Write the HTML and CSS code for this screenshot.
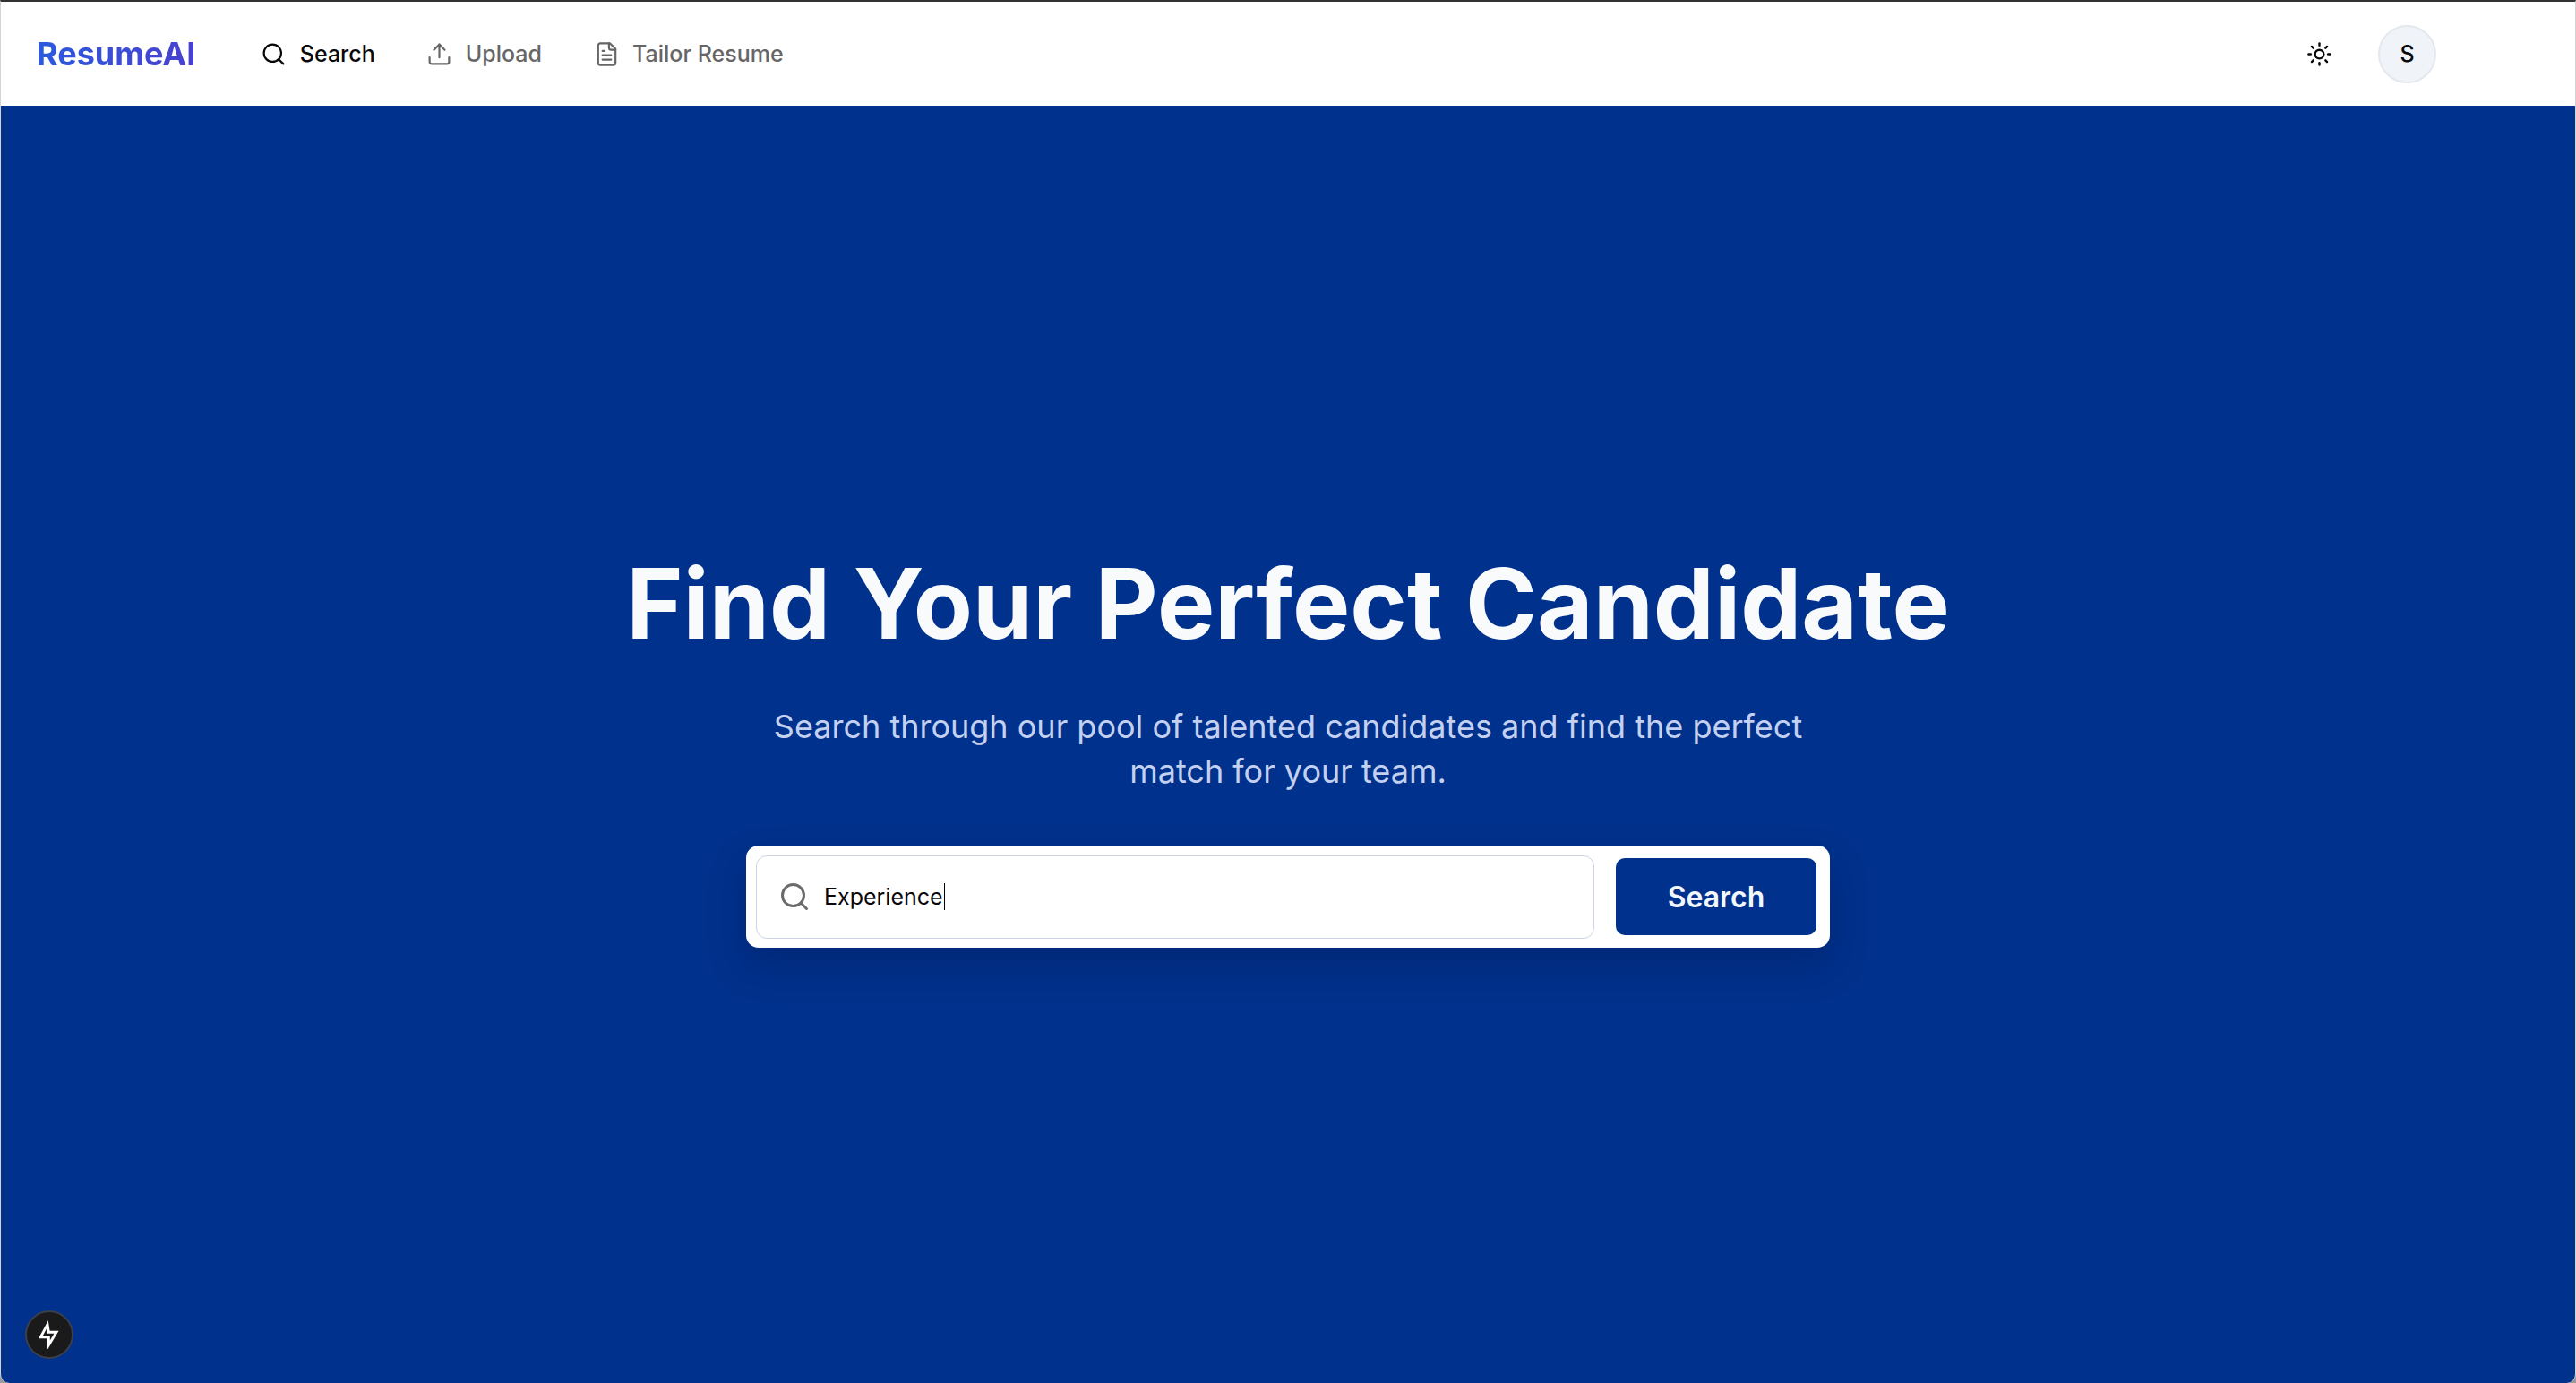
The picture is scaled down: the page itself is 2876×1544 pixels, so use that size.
FILE: index.html
```html
<!DOCTYPE html>
<html>
  <head>
    <meta charset="utf-8" />
    <title>ResumeAI</title>
    <link rel="stylesheet" href="styles.css">
  </head>
  <body>
    <div class="window">
      <nav class="nav">
        <div class="nav-left">
          <a href="#" class="logo">ResumeAI</a>
          <a href="#" class="nav-link active">
            <svg class="icon" viewBox="0 0 24 24"><circle cx="11" cy="11" r="8"/><path d="m21 21-4.3-4.3"/></svg>
            Search
          </a>
          <a href="#" class="nav-link">
            <svg class="icon" viewBox="0 0 24 24"><path d="M21 15v4a2 2 0 0 1-2 2H5a2 2 0 0 1-2-2v-4"/><polyline points="17 8 12 3 7 8"/><line x1="12" y1="3" x2="12" y2="15"/></svg>
            Upload
          </a>
          <a href="#" class="nav-link">
            <svg class="icon" viewBox="0 0 24 24"><path d="M15 2H6a2 2 0 0 0-2 2v16a2 2 0 0 0 2 2h12a2 2 0 0 0 2-2V7Z"/><path d="M14 2v4a2 2 0 0 0 2 2h4"/><path d="M10 9H8"/><path d="M16 13H8"/><path d="M16 17H8"/></svg>
            Tailor Resume
          </a>
        </div>
        <div class="nav-right">
          <svg class="icon sun" viewBox="0 0 24 24"><circle cx="12" cy="12" r="4"/><path d="M12 2v2"/><path d="M12 20v2"/><path d="m4.93 4.93 1.41 1.41"/><path d="m17.66 17.66 1.41 1.41"/><path d="M2 12h2"/><path d="M20 12h2"/><path d="m6.34 17.66-1.41 1.41"/><path d="m19.07 4.93-1.41 1.41"/></svg>
          <div class="avatar">S</div>
        </div>
      </nav>

      <main class="hero">
        <h1>Find Your Perfect Candidate</h1>
        <p class="sub">Search through our pool of talented candidates and find the perfect match for your team.</p>
        <form class="search-card">
          <div class="search-input">
            <svg class="icon" viewBox="0 0 24 24"><circle cx="11" cy="11" r="8"/><path d="m21 21-4.3-4.3"/></svg>
            <span class="query">Experience</span><span class="caret"></span>
          </div>
          <button type="button" class="search-btn">Search</button>
        </form>
      </main>

      <div class="dev-badge">
        <svg viewBox="0 0 24 24"><path d="M10.500 3.500 4.800 14h6.700v6.800L18 10h-6.500z"/></svg>
      </div>
    </div>
  </body>
</html>
```

FILE: styles.css
```css
* {
  box-sizing: border-box;
}

html, body {
  margin: 0;
  padding: 0;
  height: 100%;
  background: #9a9a9a;
}

body {
  font-family: 'Inter', 'Liberation Sans', sans-serif;
  overflow: hidden;
}

.window {
  position: relative;
  display: flex;
  flex-direction: column;
  height: 100vh;
  background: #00318c;
  border-top: 2px solid #333;
  border-left: 1px solid #d4d4d8;
  border-right: 1px solid #d4d4d8;
  border-radius: 0 0 10px 10px;
  overflow: hidden;
}

a {
  text-decoration: none;
}

.icon {
  fill: none;
  stroke: currentColor;
  stroke-width: 2;
  stroke-linecap: round;
  stroke-linejoin: round;
  flex-shrink: 0;
}

/* NAV */
.nav {
  display: flex;
  align-items: center;
  justify-content: space-between;
  height: 116px;
  padding: 0 155px 0 40px;
  background: #fff;
}

.nav-left {
  display: flex;
  align-items: center;
}

.logo {
  font-size: 36px;
  font-weight: 700;
  margin-right: 73px;
  background: linear-gradient(90deg, #2b5bdf, #4a40cf);
  -webkit-background-clip: text;
  background-clip: text;
  color: transparent;
}

.nav-link {
  display: flex;
  align-items: center;
  gap: 14.500px;
  margin-right: 57.500px;
  font-size: 25px;
  font-weight: 500;
  color: #666;
}

.nav-link .icon {
  width: 29px;
  height: 29px;
  stroke-width: 1.8;
}

.nav-link.active {
  color: #09090b;
}

.nav-right {
  display: flex;
  align-items: center;
  gap: 51px;
}

.sun {
  width: 29px;
  height: 29px;
  color: #09090b;
}

.avatar {
  display: flex;
  align-items: center;
  justify-content: center;
  width: 65px;
  height: 65px;
  border-radius: 50%;
  border: 2px solid #e4e7ee;
  background: #f0f3f8;
  font-size: 25px;
  font-weight: 500;
  color: #09090b;
}

/* HERO */
.hero {
  flex: 1;
  display: flex;
  flex-direction: column;
  align-items: center;
  padding-top: 502px;
}

h1 {
  margin: 0;
  font-size: 108px;
  line-height: 1;
  font-weight: 700;
  color: #f8fafc;
  text-align: center;
}

.sub {
  width: 1200px;
  margin: 58px 0 0;
  font-size: 36px;
  line-height: 50px;
  text-align: center;
  color: #c3d0ef;
}

.search-card {
  display: flex;
  align-items: center;
  width: 1210px;
  height: 114px;
  margin-top: 58px;
  padding: 0 15px 0 11px;
  background: #fff;
  border-radius: 14px;
  box-shadow: 0 20px 40px rgba(0, 20, 70, 0.3);
}

.search-input {
  display: flex;
  align-items: center;
  flex: 1;
  height: 93px;
  margin-right: 24px;
  padding-left: 24px;
  border: 1px solid #cdd3e2;
  border-radius: 12px;
}

.search-input .icon {
  width: 36px;
  height: 36px;
  margin-right: 15px;
  color: #6b6b6b;
}

.query {
  font-size: 25px;
  color: #09090b;
}

.caret {
  width: 1.500px;
  height: 30px;
  margin-left: 1px;
  background: #000;
}

.search-btn {
  width: 224px;
  height: 86px;
  border: 0;
  border-radius: 10px;
  background: #00318c;
  color: #f3f6fb;
  font-family: inherit;
  font-size: 32px;
  font-weight: 600;
}

/* floating dev tools button */
.dev-badge {
  position: absolute;
  left: 27px;
  bottom: 27px;
  display: flex;
  align-items: center;
  justify-content: center;
  width: 54px;
  height: 54px;
  border-radius: 50%;
  background: #1a1a1a;
  border: 2px solid #3b3f4c;
}

.dev-badge svg {
  width: 32px;
  height: 32px;
  fill: none;
  stroke: #fff;
  stroke-width: 2.200;
  stroke-linejoin: miter;
}
```
